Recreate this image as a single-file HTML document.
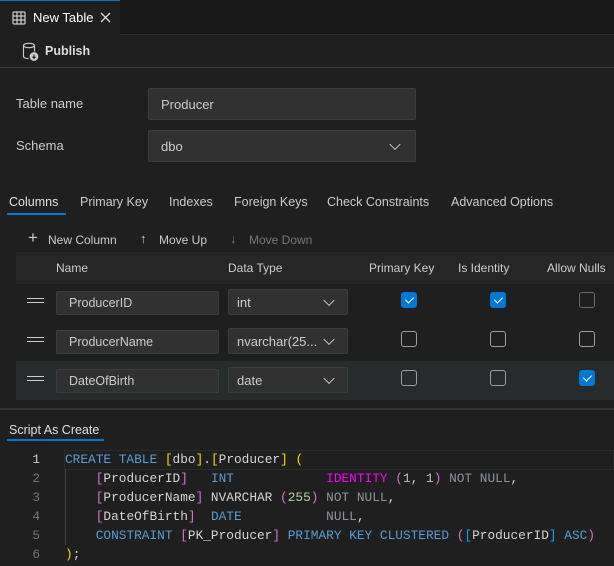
<!DOCTYPE html><html><head><meta charset="utf-8"><style>
*{box-sizing:border-box;margin:0;padding:0}
body{width:614px;height:566px;background:#1f1f1f;font-family:"Liberation Sans",sans-serif;font-size:13px;color:#cccccc;position:relative;overflow:hidden}
.a{position:absolute}
.inp{position:absolute;background:#313131;border:1px solid #3c3c3c;border-radius:2px;color:#cccccc;padding-left:12px;display:flex;align-items:center}
.chev{position:absolute;right:16px;top:50%;width:8px;height:8px;border-right:1.3px solid #ccc;border-bottom:1.3px solid #ccc;transform:translateY(-70%) rotate(45deg)}
.cb{position:absolute;width:16px;height:16px;border:1px solid #9d9d9d;border-radius:3px}
.cb.on{background:#0078d4;border-color:#0078d4}
.cb.on:after{content:"";position:absolute;left:5px;top:2px;width:4px;height:7px;border-right:1.6px solid #fff;border-bottom:1.6px solid #fff;transform:rotate(45deg)}
.drag{position:absolute;left:27px;width:17px;height:5px;border-top:1.5px solid #ccc;border-bottom:1.5px solid #ccc}
pre{font-family:"Liberation Mono",monospace;font-size:12.8px;line-height:19px;color:#d4d4d4}
.k{color:#569cd6}.y{color:#ffd700}.p{color:#da70d6}.b{color:#179fff}.g{color:#8b949e}.m{color:#ff00ff}.n{color:#b5cea8}
</style></head><body>
<div class="a" style="left:0;top:0;width:614px;height:35px;background:#181818;border-bottom:1px solid #2b2b2b"></div>
<div class="a" style="left:0;top:0;width:120px;height:35px;background:#1f1f1f;border-top:1px solid #0078d4"></div>
<svg class="a" style="left:12px;top:11px" width="14" height="14" viewBox="0 0 14 14" fill="none" stroke="#ccc" stroke-width="1.2"><rect x="1" y="1" width="12" height="12" rx="1"/><path d="M1 5h12M1 9h12M5 1v12M9 1v12"/></svg>
<div class="a" style="left:33px;top:10px;font-size:13px;color:#fff">New Table</div>
<svg class="a" style="left:100px;top:12px" width="11" height="11" viewBox="0 0 11 11" stroke="#ddd" stroke-width="1.3"><path d="M1 1l9 9M10 1l-9 9"/></svg>
<svg class="a" style="left:22px;top:42px" width="18" height="20" viewBox="0 0 18 20" fill="none" stroke="#ccc" stroke-width="1.1"><ellipse cx="7" cy="3.5" rx="5.5" ry="2.2"/><path d="M1.5 3.5v11c0 1.2 2.5 2.2 5 2.2M12.5 3.5v6"/><circle cx="12" cy="14.5" r="3.8" fill="#ccc"/><path d="M12 12.5v3.5M10.5 14.8l1.5 1.5 1.5-1.5" stroke="#1f1f1f"/></svg>
<div class="a" style="left:45px;top:44px;font-weight:bold;color:#ddd;font-size:12.5px">Publish</div>
<div class="a" style="left:0;top:67px;width:614px;height:1px;background:#3c3c3c"></div>
<div class="a" style="left:16px;top:96px">Table name</div>
<div class="inp" style="left:148px;top:88px;width:268px;height:32px">Producer</div>
<div class="a" style="left:16px;top:138px">Schema</div>
<div class="inp" style="left:148px;top:130px;width:268px;height:32px">dbo<span class="chev"></span></div>
<div class="a" style="left:9px;top:195px;color:#e0e0e0;font-size:12.5px">Columns</div>
<div class="a" style="left:7px;top:213px;width:59px;height:2px;background:#0078d4"></div>
<div class="a" style="left:80px;top:195px;font-size:12.5px">Primary Key</div>
<div class="a" style="left:169px;top:195px;font-size:12.5px">Indexes</div>
<div class="a" style="left:234px;top:195px;font-size:12.5px">Foreign Keys</div>
<div class="a" style="left:327px;top:195px;font-size:12.5px">Check Constraints</div>
<div class="a" style="left:451px;top:195px;font-size:12.5px">Advanced Options</div>
<div class="a" style="left:28px;top:228px;font-size:17px">+</div>
<div class="a" style="left:48px;top:233px;font-size:12px">New Column</div>
<div class="a" style="left:140px;top:231px;font-size:13px">↑</div>
<div class="a" style="left:159px;top:233px;font-size:12px">Move Up</div>
<div class="a" style="left:230px;top:231px;font-size:13px;color:#777">↓</div>
<div class="a" style="left:249px;top:233px;font-size:12px;color:#777">Move Down</div>
<div class="a" style="left:16px;top:252px;width:598px;height:32px;background:#262626"></div>
<div class="a" style="left:56px;top:261px;font-size:12px">Name</div>
<div class="a" style="left:228px;top:261px;font-size:12px">Data Type</div>
<div class="a" style="left:369px;top:261px;font-size:12px">Primary Key</div>
<div class="a" style="left:458px;top:261px;font-size:12px">Is Identity</div>
<div class="a" style="left:547px;top:261px;font-size:12px">Allow Nulls</div>
<div class="a" style="left:16px;top:361px;width:598px;height:39px;background:#272b2c"></div>
<div class="drag" style="top:298px"></div><div class="drag" style="top:337px"></div><div class="drag" style="top:376px"></div>
<div class="inp" style="left:56px;top:291px;width:163px;height:24px;font-size:12.5px">ProducerID</div>
<div class="inp" style="left:56px;top:330px;width:163px;height:24px;font-size:12.5px">ProducerName</div>
<div class="inp" style="left:56px;top:369px;width:163px;height:24px;font-size:12.5px">DateOfBirth</div>
<div class="inp" style="left:228px;top:289px;width:120px;height:26px;padding-left:8px">int<span class="chev" style="right:14px"></span></div>
<div class="inp" style="left:228px;top:328px;width:120px;height:26px;padding-left:8px">nvarchar(25...<span class="chev" style="right:14px"></span></div>
<div class="inp" style="left:228px;top:367px;width:120px;height:26px;padding-left:8px">date<span class="chev" style="right:14px"></span></div>
<div class="cb on" style="left:401px;top:292px"></div><div class="cb on" style="left:490px;top:292px"></div><div class="cb" style="left:579px;top:292px;border-color:#6b6b6b"></div>
<div class="cb" style="left:401px;top:331px"></div><div class="cb" style="left:490px;top:331px"></div><div class="cb" style="left:579px;top:331px"></div>
<div class="cb" style="left:401px;top:370px"></div><div class="cb" style="left:490px;top:370px"></div><div class="cb on" style="left:579px;top:370px"></div>
<div class="a" style="left:0;top:408px;width:614px;height:2px;background:#333"></div>
<div class="a" style="left:9px;top:423px;color:#e0e0e0;font-size:12.5px">Script As Create</div>
<div class="a" style="left:7px;top:439px;width:97px;height:2px;background:#0078d4"></div>
<div class="a" style="left:64px;top:450px;width:550px;height:20px;border:1px solid #2a2a2a"></div>
<div class="a" style="left:65px;top:469px;width:1px;height:76px;background:#404040"></div>
<pre class="a" style="left:24px;top:450px;text-align:right;width:16px;color:#6e7681"><span style="color:#ccc">1</span>
2
3
4
5
6</pre>
<pre class="a" style="left:65px;top:450px"><span class="k">CREATE TABLE</span> <span class="y">[</span>dbo<span class="y">]</span>.<span class="y">[</span>Producer<span class="y">]</span> <span class="y">(</span>
    <span class="p">[</span>ProducerID<span class="p">]</span>   <span class="k">INT</span>            <span class="m">IDENTITY</span> <span class="p">(</span><span class="n">1</span>, <span class="n">1</span><span class="p">)</span> <span class="g">NOT NULL</span>,
    <span class="p">[</span>ProducerName<span class="p">]</span> NVARCHAR <span class="p">(</span><span class="n">255</span><span class="p">)</span> <span class="g">NOT NULL</span>,
    <span class="p">[</span>DateOfBirth<span class="p">]</span>  <span class="k">DATE</span>           <span class="g">NULL</span>,
    <span class="k">CONSTRAINT</span> <span class="p">[</span>PK_Producer<span class="p">]</span> <span class="k">PRIMARY KEY CLUSTERED</span> <span class="p">(</span><span class="b">[</span>ProducerID<span class="b">]</span> <span class="k">ASC</span><span class="p">)</span>
<span class="y">)</span>;</pre>
</body></html>
